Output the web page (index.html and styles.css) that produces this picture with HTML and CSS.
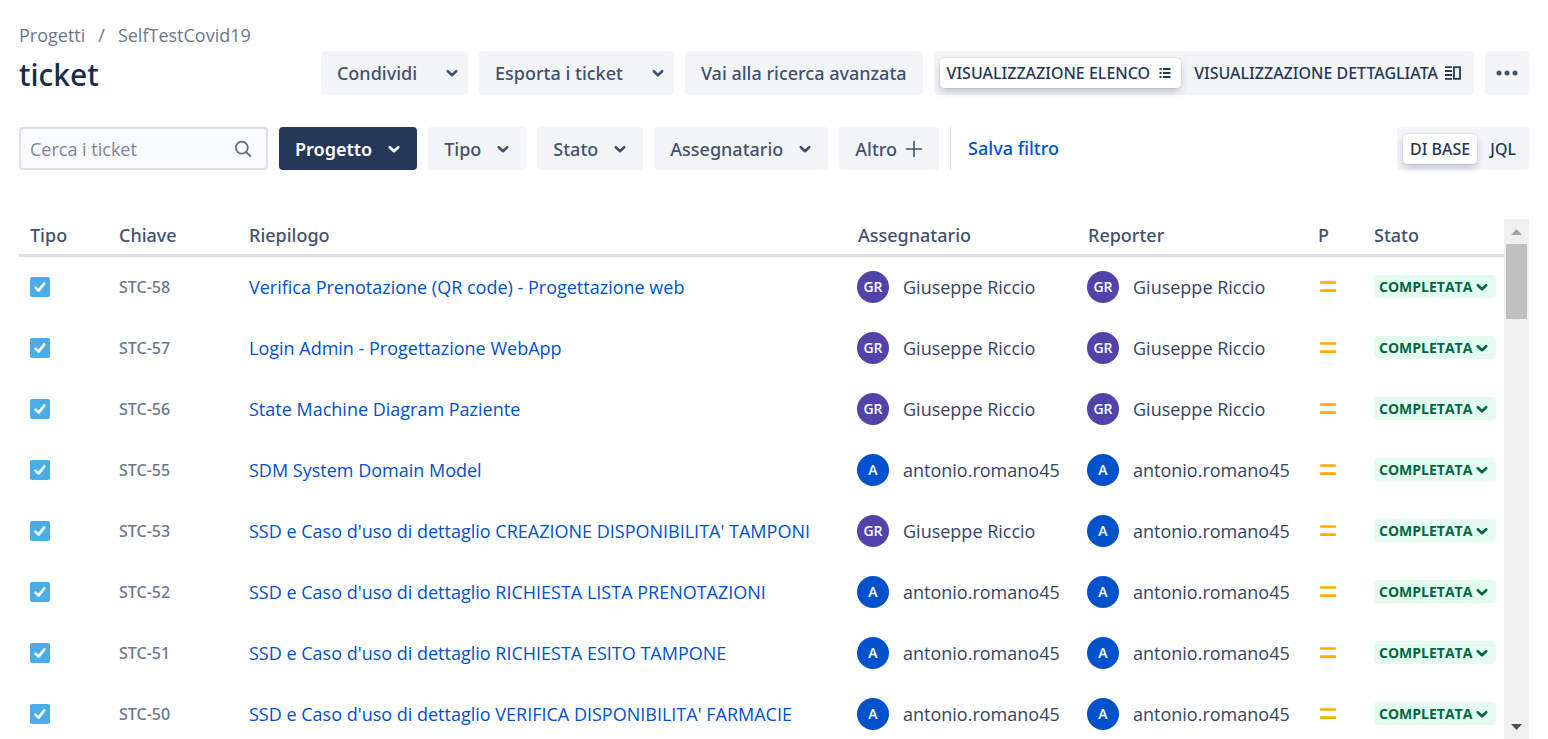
FILE: index.html
```
<!DOCTYPE html>
<html lang="it">
<head>
<meta charset="utf-8">
<title>ticket - SelfTestCovid19</title>
<link rel="stylesheet" href="styles.css">
</head>
<body>
<svg class="sprite" aria-hidden="true">
  <symbol id="chevron" viewBox="0 0 14 14"><path d="M2.8 5.2 7 9.2 11.2 5.2" fill="none" stroke="currentColor" stroke-width="2.6" stroke-linecap="round" stroke-linejoin="round"/></symbol>
  <symbol id="task" viewBox="0 0 20 20"><rect width="20" height="20" rx="2" fill="#4bade8"/><path d="M5.5 10.6 8.6 13.6 14.3 6.4" fill="none" stroke="#fff" stroke-width="2.6" stroke-linecap="round" stroke-linejoin="round"/></symbol>
  <symbol id="medium" viewBox="0 0 18 14"><path d="M3.2 2.5h13.6M3.2 10.7h13.6" stroke="#ffab00" stroke-width="2.7" stroke-linecap="round"/></symbol>
</svg>
<header class="page-header">
  <div class="heading">
    <nav class="breadcrumbs" aria-label="Percorso"><a href="#">Progetti</a><span>/</span><a href="#">SelfTestCovid19</a></nav>
    <h1>ticket</h1>
  </div>
  <div class="actions">
    <button class="btn split" type="button">Condividi<svg class="chev"><use href="#chevron"/></svg></button>
    <button class="btn split" type="button">Esporta i ticket<svg class="chev"><use href="#chevron"/></svg></button>
    <button class="btn" type="button">Vai alla ricerca avanzata</button>
    <div class="switch" role="radiogroup" aria-label="Vista">
      <label><input type="radio" name="view" checked><span class="list-option">VISUALIZZAZIONE ELENCO
        <svg width="12" height="12" viewBox="0 0 12 12"><path d="M.5 2h2M.5 6h2M.5 10h2M4 2h7.5M4 6h7.5M4 10h7.5" stroke="currentColor" stroke-width="2"/></svg></span></label>
      <label><input type="radio" name="view"><span>VISUALIZZAZIONE DETTAGLIATA
        <svg width="17" height="14" viewBox="0 0 17 14"><path d="M1 1.2h7M1 5h7M1 9h7M1 12.8h7" stroke="currentColor" stroke-width="1.8"/><rect x="10" y="1.2" width="6" height="11.6" fill="none" stroke="currentColor" stroke-width="1.8"/></svg></span></label>
    </div>
    <button class="btn more" type="button" aria-label="Altre azioni"><svg width="24" height="6" viewBox="0 0 24 6"><g fill="currentColor"><circle cx="4" cy="3" r="2.5"/><circle cx="12" cy="3" r="2.5"/><circle cx="20" cy="3" r="2.5"/></g></svg></button>
  </div>
</header>
<div class="filters">
  <div class="search">
    <input type="text" placeholder="Cerca i ticket" aria-label="Cerca i ticket">
    <svg width="18" height="18" viewBox="0 0 18 18"><path d="M11.9 11.9 16.3 16" stroke="currentColor" stroke-width="1.9" stroke-linecap="round"/><circle cx="7.8" cy="7.6" r="6" fill="none" stroke="currentColor" stroke-width="1.7"/></svg>
  </div>
  <button class="btn selected" type="button">Progetto<svg class="chev"><use href="#chevron"/></svg></button>
  <button class="btn" type="button">Tipo<svg class="chev"><use href="#chevron"/></svg></button>
  <button class="btn" type="button">Stato<svg class="chev"><use href="#chevron"/></svg></button>
  <button class="btn" type="button">Assegnatario<svg class="chev"><use href="#chevron"/></svg></button>
  <button class="btn plus" type="button">Altro<svg width="18" height="18" viewBox="0 0 18 18"><path d="M9 1.5v15M1.5 9h15" stroke="currentColor" stroke-width="1.6" stroke-linecap="round"/></svg></button>
  <a class="save" href="#">Salva filtro</a>
  <div class="switch mode" role="radiogroup" aria-label="Tipo di ricerca">
    <label><input type="radio" name="mode" checked><span>DI BASE</span></label>
    <label><input type="radio" name="mode"><span>JQL</span></label>
  </div>
</div>
<main class="issues">
  <table>
    <colgroup><col class="c-type"><col class="c-key"><col><col class="c-user"><col class="c-user"><col class="c-prio"><col class="c-status"></colgroup>
    <thead><tr><th>Tipo</th><th>Chiave</th><th>Riepilogo</th><th>Assegnatario</th><th>Reporter</th><th>P</th><th>Stato</th></tr></thead>
    <tbody id="rows"></tbody>
  </table>
  <div class="scrollbar" aria-hidden="true">
    <svg width="11" height="6" viewBox="0 0 11 6"><path d="M5.5 0 11 6H0z" fill="#a3a3a3"/></svg>
    <div class="track"><div class="thumb"></div></div>
    <svg width="11" height="6" viewBox="0 0 11 6"><path d="M0 0h11L5.5 6z" fill="#505050"/></svg>
  </div>
</main>
<script src="rows.js"></script>
</body>
</html>
```
FILE: styles.css
```
* { box-sizing: border-box; }

body {
  margin: 0;
  padding: 23px 19px 0;
  height: 100vh;
  display: flex;
  flex-direction: column;
  overflow: hidden;
  background: #fff;
  color: #42526e;
  font-family: "Open Sans", "Noto Sans", sans-serif;
  font-size: 18px;
  line-height: 24px;
}

a { text-decoration: none; }
button, input { font: inherit; }
svg { flex: none; display: block; }
.sprite { position: absolute; width: 0; height: 0; }

h1, .btn, .switch, .save, th, .key {
  font-family: "Noto Sans", "Open Sans", sans-serif;
  font-weight: 500;
}

.page-header {
  display: flex;
  justify-content: space-between;
  align-items: flex-end;
}
.breadcrumbs { display: flex; gap: 13px; color: #6b778c; }
.breadcrumbs a { color: inherit; }
h1 {
  margin: 8px 0 0;
  font-size: 30px;
  line-height: 40px;
  color: #172b4d;
}
.actions { display: flex; gap: 11px; }

.btn {
  display: flex;
  align-items: center;
  gap: 15px;
  height: 44px;
  padding: 0 16px;
  border: 0;
  border-radius: 4px;
  background: #f4f5f7;
  color: #42526e;
  white-space: nowrap;
}
.chev { width: 14px; height: 14px; }
.split { gap: 28px; padding-right: 9px; }
.more { padding: 0 10px; }
.selected { background: #253858; color: #fff; font-weight: 600; }
.plus { gap: 8px; }

.switch {
  display: flex;
  align-items: center;
  gap: 6px;
  height: 44px;
  padding: 0 6px;
  border-radius: 4px;
  background: #f4f5f7;
  color: #253858;
  font-size: 16px;
  white-space: nowrap;
}
.switch label { display: block; position: relative; }
.switch input { position: absolute; opacity: 0; margin: 0; }
.switch span {
  display: flex;
  align-items: center;
  gap: 6px;
  height: 30px;
  padding: 0 7px;
  border-radius: 4px;
}
.switch .list-option { gap: 9px; padding-right: 10px; }
.switch input:checked + span {
  background: #fff;
  box-shadow: 0 0 1px rgba(9, 30, 66, .35), 0 4px 8px -1px rgba(9, 30, 66, .27);
}

.filters { display: flex; gap: 11px; margin-top: 32px; }
.filters .btn, .filters .switch { height: 43px; }
.search {
  display: flex;
  align-items: center;
  width: 249px;
  height: 43px;
  padding: 0 14px 0 9px;
  border: 2px solid #dfe1e6;
  border-radius: 4px;
  background: #fafbfc;
  color: #5e6c84;
}
.search input {
  flex: 1;
  min-width: 0;
  padding: 0;
  border: 0;
  outline: 0;
  background: transparent;
  color: #172b4d;
}
.search input::placeholder { color: #7a869a; opacity: 1; }
.save {
  padding-left: 17px;
  border-left: 1px solid #dfe1e6;
  line-height: 43px;
  color: #0052cc;
}
.mode { margin-left: auto; }

.issues {
  flex: 1;
  min-height: 0;
  display: flex;
  margin-top: 49px;
  overflow: hidden;
}
table {
  flex: 1;
  align-self: flex-start;
  table-layout: fixed;
  width: 100%;
  border-collapse: separate;
  border-spacing: 0;
}
.c-type { width: 89px; }
.c-key { width: 130px; }
.c-user { width: 230px; }
.c-prio { width: 56px; }
.c-status { width: 141px; }
th {
  height: 38px;
  padding: 0 0 3px 11px;
  border-bottom: 3px solid #dfe1e6;
  text-align: left;
}
td {
  height: 61px;
  padding: 0 0 2px 11px;
  white-space: nowrap;
}
.key { color: #6b778c; font-size: 16px; }
.key a { color: inherit; }
.summary a { color: #0052cc; }
td.person { padding-left: 10px; }
.user { display: flex; align-items: center; gap: 14px; color: #344563; }
.avatar {
  flex: none;
  width: 32px;
  height: 32px;
  border-radius: 50%;
  background: #0052cc;
  color: #fff;
  font-size: 14px;
  line-height: 32px;
  font-weight: 600;
  text-align: center;
}
.avatar.gr { background: #5243aa; }
.status {
  display: flex;
  align-items: center;
  gap: 3px;
  height: 23px;
  padding: 0 7px 0 5px;
  border: 0;
  border-radius: 4px;
  background: #e3fcef;
  color: #006644;
  font-size: 14px;
  font-weight: 700;
}

.scrollbar {
  flex: none;
  display: flex;
  flex-direction: column;
  align-items: center;
  gap: 9px;
  width: 25px;
  padding: 10px 2px 9px;
  background: #f0f0f0;
}
.track { flex: 1; align-self: stretch; }
.thumb { height: 16%; background: #c1c1c1; }
```
FILE: rows.js
```
const people = { G: ["GR", "Giuseppe Riccio", "gr"], A: ["A", "antonio.romano45", ""] };
const issues = [
  ["STC-58", "Verifica Prenotazione (QR code) - Progettazione web", "G", "G"],
  ["STC-57", "Login Admin - Progettazione WebApp", "G", "G"],
  ["STC-56", "State Machine Diagram Paziente", "G", "G"],
  ["STC-55", "SDM System Domain Model", "A", "A"],
  ["STC-53", "SSD e Caso d'uso di dettaglio CREAZIONE DISPONIBILITA' TAMPONI", "G", "A"],
  ["STC-52", "SSD e Caso d'uso di dettaglio RICHIESTA LISTA PRENOTAZIONI", "A", "A"],
  ["STC-51", "SSD e Caso d'uso di dettaglio RICHIESTA ESITO TAMPONE", "A", "A"],
  ["STC-50", "SSD e Caso d'uso di dettaglio VERIFICA DISPONIBILITA' FARMACIE", "A", "A"]
];
const user = id => {
  const [initials, name, cls] = people[id];
  return `<td class="person"><div class="user"><span class="avatar ${cls}">${initials}</span>${name}</div></td>`;
};
document.getElementById("rows").innerHTML = issues.map(([key, summary, assignee, reporter]) => `
  <tr>
    <td><svg width="20" height="20" role="img" aria-label="Task"><use href="#task"/></svg></td>
    <td class="key"><a href="#">${key}</a></td>
    <td class="summary"><a href="#">${summary}</a></td>
    ${user(assignee)}${user(reporter)}
    <td><svg width="18" height="14" role="img" aria-label="Medium"><use href="#medium"/></svg></td>
    <td><button class="status" type="button">COMPLETATA<svg class="chev"><use href="#chevron"/></svg></button></td>
  </tr>`).join("");
```
